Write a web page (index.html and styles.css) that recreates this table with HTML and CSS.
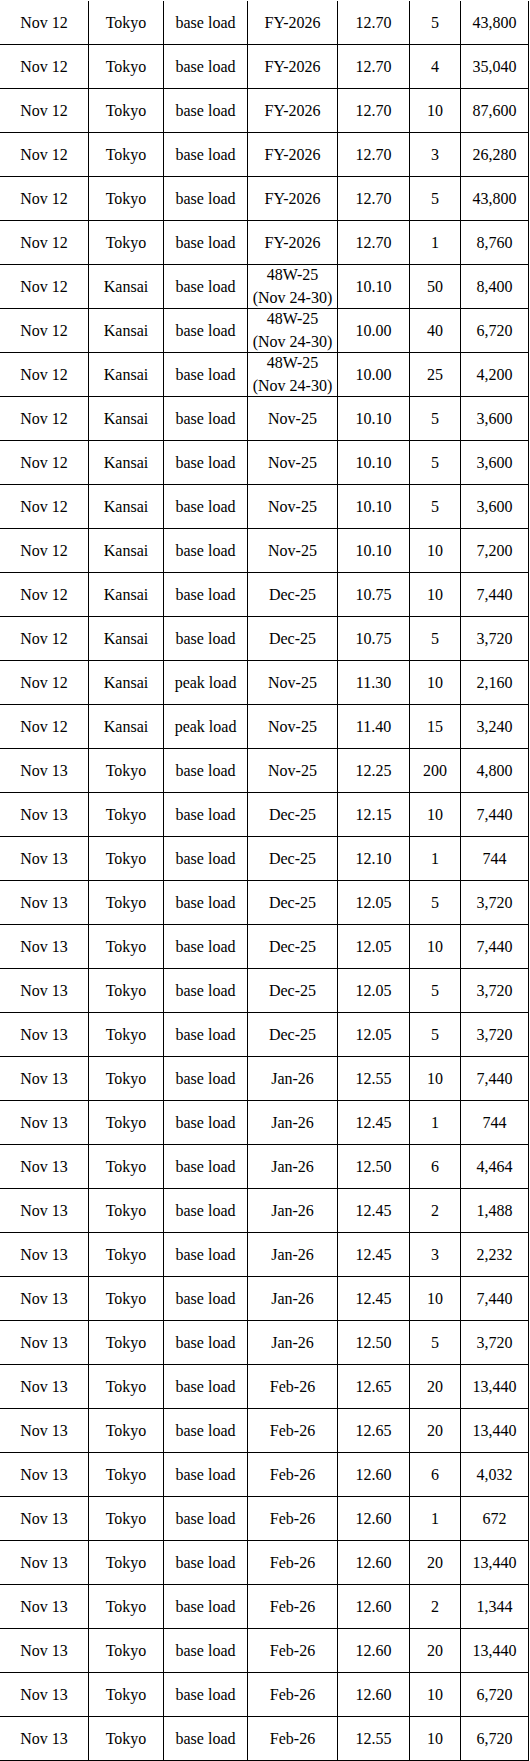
FILE: index.html
```html
<!DOCTYPE html>
<html lang="en">
<head>
<meta charset="utf-8">
<title>Trades</title>
<link rel="stylesheet" href="styles.css">
</head>
<body>
<table class="trades">
<colgroup>
<col class="c-date"><col class="c-area"><col class="c-type"><col class="c-period"><col class="c-price"><col class="c-vol"><col class="c-total">
</colgroup>
<tbody>
<tr><td>Nov 12</td><td>Tokyo</td><td>base load</td><td>FY-2026</td><td>12.70</td><td>5</td><td>43,800</td></tr>
<tr><td>Nov 12</td><td>Tokyo</td><td>base load</td><td>FY-2026</td><td>12.70</td><td>4</td><td>35,040</td></tr>
<tr><td>Nov 12</td><td>Tokyo</td><td>base load</td><td>FY-2026</td><td>12.70</td><td>10</td><td>87,600</td></tr>
<tr><td>Nov 12</td><td>Tokyo</td><td>base load</td><td>FY-2026</td><td>12.70</td><td>3</td><td>26,280</td></tr>
<tr><td>Nov 12</td><td>Tokyo</td><td>base load</td><td>FY-2026</td><td>12.70</td><td>5</td><td>43,800</td></tr>
<tr><td>Nov 12</td><td>Tokyo</td><td>base load</td><td>FY-2026</td><td>12.70</td><td>1</td><td>8,760</td></tr>
<tr><td>Nov 12</td><td>Kansai</td><td>base load</td><td><span class="two">48W-25<br>(Nov 24-30)</span></td><td>10.10</td><td>50</td><td>8,400</td></tr>
<tr><td>Nov 12</td><td>Kansai</td><td>base load</td><td><span class="two">48W-25<br>(Nov 24-30)</span></td><td>10.00</td><td>40</td><td>6,720</td></tr>
<tr><td>Nov 12</td><td>Kansai</td><td>base load</td><td><span class="two">48W-25<br>(Nov 24-30)</span></td><td>10.00</td><td>25</td><td>4,200</td></tr>
<tr><td>Nov 12</td><td>Kansai</td><td>base load</td><td>Nov-25</td><td>10.10</td><td>5</td><td>3,600</td></tr>
<tr><td>Nov 12</td><td>Kansai</td><td>base load</td><td>Nov-25</td><td>10.10</td><td>5</td><td>3,600</td></tr>
<tr><td>Nov 12</td><td>Kansai</td><td>base load</td><td>Nov-25</td><td>10.10</td><td>5</td><td>3,600</td></tr>
<tr><td>Nov 12</td><td>Kansai</td><td>base load</td><td>Nov-25</td><td>10.10</td><td>10</td><td>7,200</td></tr>
<tr><td>Nov 12</td><td>Kansai</td><td>base load</td><td>Dec-25</td><td>10.75</td><td>10</td><td>7,440</td></tr>
<tr><td>Nov 12</td><td>Kansai</td><td>base load</td><td>Dec-25</td><td>10.75</td><td>5</td><td>3,720</td></tr>
<tr><td>Nov 12</td><td>Kansai</td><td>peak load</td><td>Nov-25</td><td>11.30</td><td>10</td><td>2,160</td></tr>
<tr><td>Nov 12</td><td>Kansai</td><td>peak load</td><td>Nov-25</td><td>11.40</td><td>15</td><td>3,240</td></tr>
<tr><td>Nov 13</td><td>Tokyo</td><td>base load</td><td>Nov-25</td><td>12.25</td><td>200</td><td>4,800</td></tr>
<tr><td>Nov 13</td><td>Tokyo</td><td>base load</td><td>Dec-25</td><td>12.15</td><td>10</td><td>7,440</td></tr>
<tr><td>Nov 13</td><td>Tokyo</td><td>base load</td><td>Dec-25</td><td>12.10</td><td>1</td><td>744</td></tr>
<tr><td>Nov 13</td><td>Tokyo</td><td>base load</td><td>Dec-25</td><td>12.05</td><td>5</td><td>3,720</td></tr>
<tr><td>Nov 13</td><td>Tokyo</td><td>base load</td><td>Dec-25</td><td>12.05</td><td>10</td><td>7,440</td></tr>
<tr><td>Nov 13</td><td>Tokyo</td><td>base load</td><td>Dec-25</td><td>12.05</td><td>5</td><td>3,720</td></tr>
<tr><td>Nov 13</td><td>Tokyo</td><td>base load</td><td>Dec-25</td><td>12.05</td><td>5</td><td>3,720</td></tr>
<tr><td>Nov 13</td><td>Tokyo</td><td>base load</td><td>Jan-26</td><td>12.55</td><td>10</td><td>7,440</td></tr>
<tr><td>Nov 13</td><td>Tokyo</td><td>base load</td><td>Jan-26</td><td>12.45</td><td>1</td><td>744</td></tr>
<tr><td>Nov 13</td><td>Tokyo</td><td>base load</td><td>Jan-26</td><td>12.50</td><td>6</td><td>4,464</td></tr>
<tr><td>Nov 13</td><td>Tokyo</td><td>base load</td><td>Jan-26</td><td>12.45</td><td>2</td><td>1,488</td></tr>
<tr><td>Nov 13</td><td>Tokyo</td><td>base load</td><td>Jan-26</td><td>12.45</td><td>3</td><td>2,232</td></tr>
<tr><td>Nov 13</td><td>Tokyo</td><td>base load</td><td>Jan-26</td><td>12.45</td><td>10</td><td>7,440</td></tr>
<tr><td>Nov 13</td><td>Tokyo</td><td>base load</td><td>Jan-26</td><td>12.50</td><td>5</td><td>3,720</td></tr>
<tr><td>Nov 13</td><td>Tokyo</td><td>base load</td><td>Feb-26</td><td>12.65</td><td>20</td><td>13,440</td></tr>
<tr><td>Nov 13</td><td>Tokyo</td><td>base load</td><td>Feb-26</td><td>12.65</td><td>20</td><td>13,440</td></tr>
<tr><td>Nov 13</td><td>Tokyo</td><td>base load</td><td>Feb-26</td><td>12.60</td><td>6</td><td>4,032</td></tr>
<tr><td>Nov 13</td><td>Tokyo</td><td>base load</td><td>Feb-26</td><td>12.60</td><td>1</td><td>672</td></tr>
<tr><td>Nov 13</td><td>Tokyo</td><td>base load</td><td>Feb-26</td><td>12.60</td><td>20</td><td>13,440</td></tr>
<tr><td>Nov 13</td><td>Tokyo</td><td>base load</td><td>Feb-26</td><td>12.60</td><td>2</td><td>1,344</td></tr>
<tr><td>Nov 13</td><td>Tokyo</td><td>base load</td><td>Feb-26</td><td>12.60</td><td>20</td><td>13,440</td></tr>
<tr><td>Nov 13</td><td>Tokyo</td><td>base load</td><td>Feb-26</td><td>12.60</td><td>10</td><td>6,720</td></tr>
<tr><td>Nov 13</td><td>Tokyo</td><td>base load</td><td>Feb-26</td><td>12.55</td><td>10</td><td>6,720</td></tr>
</tbody>
</table>
</body>
</html>
```

FILE: styles.css
```css
html, body {
  margin: 0;
  padding: 0;
  background: #fff;
}

body {
  padding-top: 1px;
  font-family: "Liberation Serif", "Times New Roman", serif;
  font-size: 16px;
  color: #000;
}

.trades {
  table-layout: fixed;
  width: 529px;
  border-collapse: separate;
  border-spacing: 0;
}

.c-date { width: 89px; }
.c-area { width: 75px; }
.c-type { width: 84px; }
.c-period { width: 90px; }
.c-price { width: 72px; }
.c-vol { width: 51px; }
.c-total { width: 68px; }

.trades td {
  box-sizing: border-box;
  height: 44px;
  padding: 0;
  border-right: 1px solid #000;
  border-bottom: 1px solid #000;
  text-align: center;
  vertical-align: middle;
  white-space: nowrap;
  line-height: 20px;
}

.two {
  display: block;
  line-height: 23px;
  margin: -2px 0 -1px;
}
```
